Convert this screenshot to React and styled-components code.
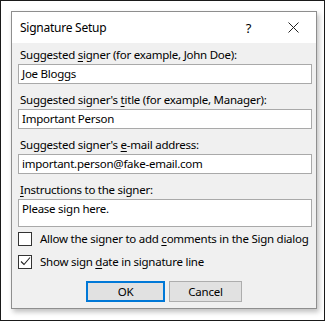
import React from "react";
import styled, { createGlobalStyle } from "styled-components";

const GlobalStyle = createGlobalStyle`
  html, body {
    margin: 0;
    padding: 0;
    background: #ffffff;
  }
  * {
    box-sizing: border-box;
  }
`;

const Frame = styled.div`
  width: 325px;
  height: 321px;
  border: 1px solid #1a1a1a;
  background: #ffffff;
  padding: 10px 0 0 10px;
  font-family: "Noto Sans", "Open Sans", sans-serif;
  font-size: 11.5px;
  letter-spacing: -0.25px;
  color: #000000;
`;

const Dialog = styled.div`
  width: 306px;
  height: 298px;
  border: 1px solid #8e8e8e;
  background: #f0f0f0;
  display: flex;
  flex-direction: column;
  overflow: hidden;
  box-shadow: 2px 3px 5px rgba(0, 0, 0, 0.25);
`;

const TitleBar = styled.div`
  height: 31px;
  background: #ffffff;
  display: flex;
  align-items: center;
  padding-left: 8px;
  flex-shrink: 0;
`;

const Title = styled.div`
  flex: 1;
  font-size: 12px;
`;

const TitleButton = styled.div`
  width: 45px;
  height: 31px;
  display: flex;
  align-items: center;
  justify-content: center;
  font-size: 13px;
`;

const Body = styled.div`
  flex: 1;
  display: flex;
  flex-direction: column;
  padding: 4px 4px 0 6px;
`;

const Field = styled.div`
  display: flex;
  flex-direction: column;
  margin-bottom: ${(p) => (p.$last ? "0" : "8px")};
`;

const Label = styled.label`
  line-height: 16px;
  height: 16px;
  margin-bottom: 1px;
  padding-left: 2px;
  white-space: nowrap;

  u {
    text-decoration: underline;
    text-underline-offset: 2px;
  }
`;

const TextBox = styled.div`
  height: ${(p) => (p.$tall ? "28px" : "20px")};
  background: #ffffff;
  border: 1px solid #a9a9a9;
  padding: 1px 3px 0;
  line-height: 16px;
  white-space: nowrap;
`;

const CheckRow = styled.div`
  display: flex;
  align-items: center;
  height: 23px;
  gap: 8px;
  white-space: nowrap;

  u {
    text-decoration: underline;
    text-underline-offset: 2px;
  }
`;

const Box = styled.div`
  width: 14px;
  height: 14px;
  border: 1px solid #333333;
  background: #ffffff;
  display: flex;
  align-items: center;
  justify-content: center;
  flex-shrink: 0;
`;

const Buttons = styled.div`
  display: flex;
  justify-content: center;
  gap: 4px;
  margin-top: 8px;
  padding-right: 2px;
`;

const Button = styled.div`
  width: ${(p) => (p.$primary ? "79px" : "73px")};
  height: 21px;
  background: #e1e1e1;
  border: ${(p) => (p.$primary ? "2px solid #0078d7" : "1px solid #adadad")};
  display: flex;
  align-items: center;
  justify-content: center;
`;

const Check = () => (
  <svg width="11" height="11" viewBox="0 0 11 11">
    <path d="M1 5.5 L4 8.5 L10 1.5" fill="none" stroke="#222" strokeWidth="1.1" />
  </svg>
);

const CloseIcon = () => (
  <svg width="11" height="11" viewBox="0 0 11 11">
    <path d="M0.5 0.5 L10.5 10.5 M10.5 0.5 L0.5 10.5" stroke="#222" strokeWidth="1" />
  </svg>
);

export default function App() {
  return (
    <>
      <GlobalStyle />
      <Frame>
        <Dialog>
          <TitleBar>
            <Title>Signature Setup</Title>
            <TitleButton>?</TitleButton>
            <TitleButton>
              <CloseIcon />
            </TitleButton>
          </TitleBar>
          <Body>
            <Field>
              <Label>
                Suggested <u>s</u>igner (for example, John Doe):
              </Label>
              <TextBox>Joe Bloggs</TextBox>
            </Field>
            <Field>
              <Label>
                Suggested signer's <u>t</u>itle (for example, Manager):
              </Label>
              <TextBox>Important Person</TextBox>
            </Field>
            <Field>
              <Label>
                Suggested signer's <u>e</u>-mail address:
              </Label>
              <TextBox>important.person@fake-email.com</TextBox>
            </Field>
            <Field $last>
              <Label>
                <u>I</u>nstructions to the signer:
              </Label>
              <TextBox $tall>Please sign here.</TextBox>
            </Field>
            <CheckRow>
              <Box />
              <span>
                Allow the signer to add <u>c</u>omments in the Sign dialog
              </span>
            </CheckRow>
            <CheckRow>
              <Box>
                <Check />
              </Box>
              <span>
                Show sign <u>d</u>ate in signature line
              </span>
            </CheckRow>
            <Buttons>
              <Button $primary>OK</Button>
              <Button>Cancel</Button>
            </Buttons>
          </Body>
        </Dialog>
      </Frame>
    </>
  );
}
